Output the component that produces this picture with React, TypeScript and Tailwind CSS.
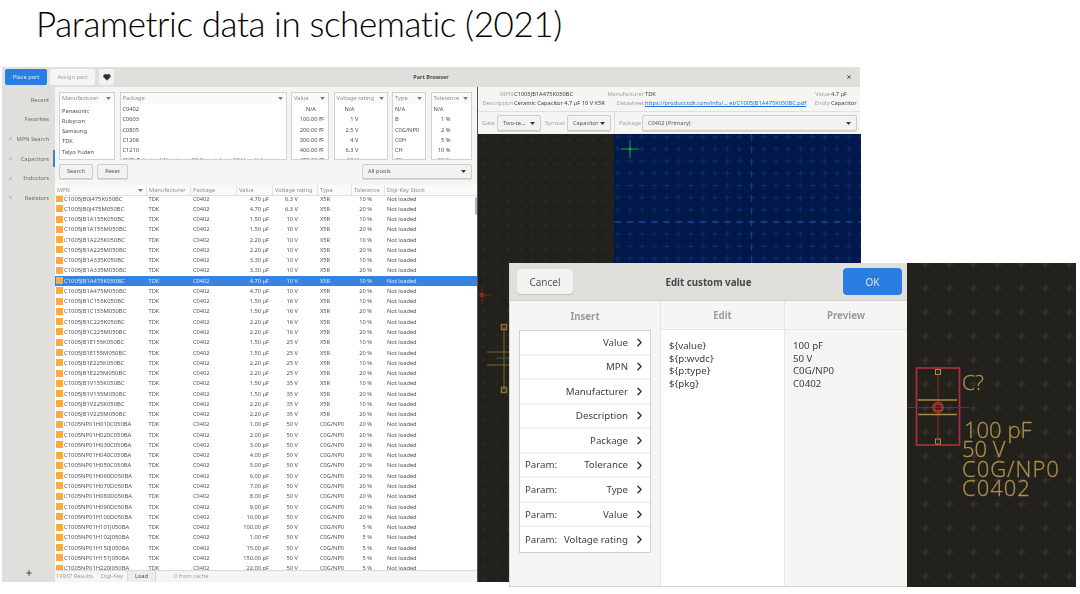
import { ChevronRight, Heart, Plus, X } from "lucide-react";

const TABLE_COLS = "grid grid-cols-[92px_44px_46px_36px_45px_34px_33px_1fr]";

const RAW_ROWS: [string, string, string, string, string][] = [
  ["C1005JB0J475K050BC", "4.70 µF", "6.3 V", "X5R", "10 %"],
  ["C1005JB0J475M050BC", "4.70 µF", "6.3 V", "X5R", "20 %"],
  ["C1005JB1A155K050BC", "1.50 µF", "10 V", "X5R", "10 %"],
  ["C1005JB1A155M050BC", "1.50 µF", "10 V", "X5R", "20 %"],
  ["C1005JB1A225K050BC", "2.20 µF", "10 V", "X5R", "10 %"],
  ["C1005JB1A225M050BC", "2.20 µF", "10 V", "X5R", "20 %"],
  ["C1005JB1A335K050BC", "3.30 µF", "10 V", "X5R", "10 %"],
  ["C1005JB1A335M050BC", "3.30 µF", "10 V", "X5R", "20 %"],
  ["C1005JB1A475K050BC", "4.70 µF", "10 V", "X5R", "10 %"],
  ["C1005JB1A475M050BC", "4.70 µF", "10 V", "X5R", "20 %"],
  ["C1005JB1C155K050BC", "1.50 µF", "16 V", "X5R", "10 %"],
  ["C1005JB1C155M050BC", "1.50 µF", "16 V", "X5R", "20 %"],
  ["C1005JB1C225K050BC", "2.20 µF", "16 V", "X5R", "10 %"],
  ["C1005JB1C225M050BC", "2.20 µF", "16 V", "X5R", "20 %"],
  ["C1005JB1E155K050BC", "1.50 µF", "25 V", "X5R", "10 %"],
  ["C1005JB1E155M050BC", "1.50 µF", "25 V", "X5R", "20 %"],
  ["C1005JB1E225K050BC", "2.20 µF", "25 V", "X5R", "10 %"],
  ["C1005JB1E225M050BC", "2.20 µF", "25 V", "X5R", "20 %"],
  ["C1005JB1V155K050BC", "1.50 µF", "35 V", "X5R", "10 %"],
  ["C1005JB1V155M050BC", "1.50 µF", "35 V", "X5R", "20 %"],
  ["C1005JB1V225K050BC", "2.20 µF", "35 V", "X5R", "10 %"],
  ["C1005JB1V225M050BC", "2.20 µF", "35 V", "X5R", "20 %"],
  ["C1005NP01H010C050BA", "1.00 pF", "50 V", "C0G/NP0", "20 %"],
  ["C1005NP01H020C050BA", "2.00 pF", "50 V", "C0G/NP0", "20 %"],
  ["C1005NP01H030C050BA", "3.00 pF", "50 V", "C0G/NP0", "20 %"],
  ["C1005NP01H040C050BA", "4.00 pF", "50 V", "C0G/NP0", "20 %"],
  ["C1005NP01H050C050BA", "5.00 pF", "50 V", "C0G/NP0", "20 %"],
  ["C1005NP01H060D050BA", "6.00 pF", "50 V", "C0G/NP0", "20 %"],
  ["C1005NP01H070D050BA", "7.00 pF", "50 V", "C0G/NP0", "20 %"],
  ["C1005NP01H080D050BA", "8.00 pF", "50 V", "C0G/NP0", "20 %"],
  ["C1005NP01H090D050BA", "9.00 pF", "50 V", "C0G/NP0", "20 %"],
  ["C1005NP01H100D050BA", "10.00 pF", "50 V", "C0G/NP0", "20 %"],
  ["C1005NP01H101J050BA", "100.00 pF", "50 V", "C0G/NP0", "5 %"],
  ["C1005NP01H102J050BA", "1.00 nF", "50 V", "C0G/NP0", "5 %"],
  ["C1005NP01H150J050BA", "15.00 pF", "50 V", "C0G/NP0", "5 %"],
  ["C1005NP01H151J050BA", "150.00 pF", "50 V", "C0G/NP0", "5 %"],
  ["C1005NP01H220J050BA", "22.00 pF", "50 V", "C0G/NP0", "5 %"],
];

const SIDEBAR = [
  { label: "Recent" },
  { label: "Favorites" },
  { label: "MPN Search", closable: true },
  { label: "Capacitors", closable: true, active: true },
  { label: "Inductors", closable: true },
  { label: "Resistors", closable: true },
];

const FILTERS = [
  { title: "Manufacturer", w: "w-[56px]", items: ["Panasonic", "Rubycon", "Samsung", "TDK", "Taiyo Yuden"], cls: "pl-[2px] pt-[1.5px]", na: "" },
  { title: "Package", w: "w-[167px]", items: ["C0402", "C0603", "C0805", "C1206", "C1210", "SMD Polarized Aluminum 20 % tantalum, 10 V, radial"], cls: "pl-[2px]", na: "" },
  { title: "Value", w: "w-[38px]", items: ["N/A", "100.00 fF", "200.00 fF", "300.00 fF", "400.00 fF", "470.00 fF"], cls: "text-right pr-[4px]", na: "pr-[8px]" },
  { title: "Voltage rating", w: "w-[54px]", items: ["N/A", "1 V", "2.5 V", "4 V", "6.3 V", "10 V"], cls: "text-right pr-[28px]", na: "pr-[4px]" },
  { title: "Type", w: "w-[34px]", items: ["N/A", "B", "C0G/NP0", "C0H", "CH", "CK"], cls: "pl-[2px]", na: "" },
  { title: "Tolerance", w: "w-[41px]", items: ["N/A", "1 %", "2 %", "5 %", "10 %", "20 %"], cls: "text-right pr-[20px]", na: "pr-[7px]" },
];

const INSERTS = [
  { label: "Value" },
  { label: "MPN" },
  { label: "Manufacturer" },
  { label: "Description" },
  { label: "Package" },
  { label: "Tolerance", param: true },
  { label: "Type", param: true },
  { label: "Value", param: true },
  { label: "Voltage rating", param: true },
];

function Caret({ className }: { className?: string }) {
  return (
    <svg viewBox="0 0 8 5" className={className ?? "h-[3px] w-[5px] shrink-0"}>
      <path d="M0 0h8L4 5z" fill="currentColor" />
    </svg>
  );
}

function Combo({ children, className }: { children: React.ReactNode; className: string }) {
  return (
    <div className={`flex h-[16px] items-center justify-between rounded-[2px] border border-[#cfcdc9] bg-[#f3f2f0] px-[5px] text-[5.7px] text-[#55585a] shadow-[0_1px_0_#d8d6d2] ${className}`}>
      <span className="whitespace-nowrap">{children}</span>
      <Caret className="h-[3px] w-[5px] shrink-0 text-[#2e3436]" />
    </div>
  );
}

function Sidebar() {
  return (
    <aside className="flex w-[53px] shrink-0 flex-col bg-[#e1dfdc] pt-[3px] text-[5.7px] text-[#6a6c6c]">
      {SIDEBAR.map((s) => (
        <div key={s.label} className="relative flex h-[19.7px] items-center justify-end pr-[6px]">
          {s.closable && <X className="absolute left-[6px] top-[7px] h-[5px] w-[5px] text-[#8d8b88]" strokeWidth={2} />}
          <span className="whitespace-nowrap">{s.label}</span>
          {s.active && <div className="absolute right-0 top-[1px] h-[17px] w-[2px] bg-[#3584e4]" />}
        </div>
      ))}
      <div className="mt-auto flex h-[18px] items-center justify-center pl-[1px] text-[#2e3436]">
        <Plus className="h-[8px] w-[8px]" strokeWidth={2.5} />
      </div>
    </aside>
  );
}

function Filters() {
  return (
    <div className="flex h-[73px] shrink-0 gap-[4.5px] pl-[4px] pt-[5px]">
      {FILTERS.map((f) => (
        <div key={f.title} className={`${f.w} h-[68px] shrink-0 overflow-hidden border border-[#d4d2ce] bg-white`}>
          <div className="flex h-[11px] items-center justify-between bg-[#fafaf9] pl-[2px] pr-[3px] text-[5.7px] text-[#8d8f8f]">
            <span className="whitespace-nowrap">{f.title}</span>
            <Caret className="h-[3px] w-[5px] shrink-0 text-[#77797a]" />
          </div>
          <div className={`text-[5.7px] leading-[10.3px] text-[#4a4d4e] ${f.cls}`}>
            {f.items.map((it) => (
              <div key={it} className={`h-[10.3px] whitespace-nowrap ${it === "N/A" ? f.na : ""}`}>{it}</div>
            ))}
          </div>
        </div>
      ))}
    </div>
  );
}

function PartRow({ row, selected }: { row: (typeof RAW_ROWS)[number]; selected: boolean }) {
  const [mpn, value, volt, type, tol] = row;
  return (
    <div className={`${TABLE_COLS} h-[10.27px] shrink-0 items-center text-[5.7px] leading-[10px] ${selected ? "bg-[#3584e4] text-[#dfeafa]" : "text-[#4f5254]"}`}>
      <div className="flex items-center whitespace-nowrap pl-[1px] text-[5.85px]">
        <div className="mr-[1px] h-[7px] w-[7px] shrink-0 bg-[#fdab3b]" />
        {mpn}
      </div>
      <div className="pl-[1.5px]">TDK</div>
      <div className="pl-[2px]">C0402</div>
      <div className="whitespace-nowrap pr-[4px] text-right">{value}</div>
      <div className="pr-[20px] text-right">{volt}</div>
      <div className="pl-[2px]">{type}</div>
      <div className="pr-[13px] text-right">{tol}</div>
      <div className="whitespace-nowrap pl-[2px]">Not loaded</div>
    </div>
  );
}

function PartTable() {
  const headers = ["MPN", "Manufacturer", "Package", "Value", "Voltage rating", "Type", "Tolerance", "Digi-Key Stock"];
  return (
    <div className="relative flex min-h-0 flex-1 flex-col bg-white">
      <div className={`${TABLE_COLS} relative z-10 h-[11px] shrink-0 items-center border-b border-[#e2e0dd] bg-[#fafaf9] text-[5.7px] text-[#8d8f8f]`}>
        {headers.map((h, i) => (
          <div key={h} className={`flex h-full items-center justify-between whitespace-nowrap pl-[2px] pr-[3px] ${i < 7 ? "border-r border-[#e6e4e1]" : ""}`}>
            {h}
            {i === 0 && <Caret className="h-[3px] w-[5px] text-[#77797a]" />}
          </div>
        ))}
      </div>
      <div className="min-h-0 flex-1 overflow-hidden">
        <div className="-mt-[2.6px] flex flex-col">
          {RAW_ROWS.map((r) => (
            <PartRow key={r[0]} row={r} selected={r[0] === "C1005JB1A475K050BC"} />
          ))}
        </div>
      </div>
      <div className="absolute right-0 top-[12px] h-[18px] w-[2px] rounded-full bg-[#b5b5b5]" />
    </div>
  );
}

function StatusBar() {
  return (
    <div className="flex h-[12px] shrink-0 items-center border-t border-[#dcdad6] bg-[#f6f5f4] pl-[1px] text-[5.7px] text-[#a0a1a1]">
      <span className="w-[45px] whitespace-nowrap">19937 Results</span>
      <span className="w-[26px] whitespace-nowrap">Digi-Key</span>
      <div className="flex h-full w-[29px] items-center justify-center border-x border-[#dcdad6] bg-[#eeedeb] text-[#4a4d4e]">Load</div>
      <span className="ml-[18px] whitespace-nowrap">0 from cache</span>
    </div>
  );
}

function BrowserPane() {
  return (
    <div className="flex w-[422px] shrink-0 flex-col">
      <Filters />
      <div className="flex h-[25px] shrink-0 items-start justify-between pl-[4px] pr-[5px] pt-[4px] text-[5.7px] text-[#55585a]">
        <div className="flex gap-[4px]">
          <div className="flex h-[15px] w-[34px] items-center justify-center rounded-[2px] border border-[#cfcdc9] bg-[#f3f2f0] shadow-[0_1px_0_#d8d6d2]">Search</div>
          <div className="flex h-[15px] w-[31px] items-center justify-center rounded-[2px] border border-[#cfcdc9] bg-[#f3f2f0] shadow-[0_1px_0_#d8d6d2]">Reset</div>
        </div>
        <Combo className="!h-[15px] w-[110px]">All pools</Combo>
      </div>
      <PartTable />
      <StatusBar />
    </div>
  );
}

function InfoBar() {
  const label = "text-right text-[#a2a3a3] whitespace-nowrap";
  const value = "pl-[1px] text-[#3c3f40] whitespace-nowrap";
  return (
    <div className="grid h-[25px] shrink-0 grid-cols-[35px_93px_38px_167px_19px_1fr] content-center border-b border-[#e2e0dd] bg-[#f6f5f4] text-[5.7px] leading-[9.5px]">
      <div className={label}>MPN</div>
      <div className={value}>C1005JB1A475K050BC</div>
      <div className={label}>Manufacturer</div>
      <div className={value}>TDK</div>
      <div className={label}>Value</div>
      <div className={value}>4.7 µF</div>
      <div className={label}>Description</div>
      <div className={value}>Ceramic Capacitor 4.7 µF 10 V X5R</div>
      <div className={label}>Datasheet</div>
      <div className="overflow-hidden whitespace-nowrap pl-[1px] text-[#1c71d8] underline">https://product.tdk.com/info/… et/C1005JB1A475K050BC.pdf</div>
      <div className={label}>Entity</div>
      <div className={value}>Capacitor</div>
    </div>
  );
}

function GateBar() {
  const label = "text-[#a2a3a3] whitespace-nowrap";
  return (
    <div className="flex h-[22px] shrink-0 items-center bg-[#f6f5f4] pl-[4px] text-[5.7px]">
      <span className={`${label} w-[15px]`}>Gate</span>
      <Combo className="w-[44px]">Two-te...</Combo>
      <span className={`${label} ml-[4px] w-[22px]`}>Symbol</span>
      <Combo className="w-[44px]">Capacitor</Combo>
      <div className="ml-[3px] h-full w-px bg-[#dcdad6]" />
      <span className={`${label} ml-[4px] w-[23px]`}>Package</span>
      <Combo className="w-[215px]">C0402 (Primary)</Combo>
    </div>
  );
}

function DarkCanvas() {
  return (
    <svg className="h-full w-[136px] shrink-0 bg-[#23211c]" viewBox="0 0 136 448">
      <defs>
        <pattern id="darkGrid" width="12.17" height="12.17" patternUnits="userSpaceOnUse">
          <path d="M6 4v4M4 6h4" stroke="#2c2a25" strokeWidth="1" />
        </pattern>
      </defs>
      <rect width="136" height="448" fill="url(#darkGrid)" />
      <path d="M4 152v18M-5 161H13" stroke="#6e241b" strokeWidth="1" />
      <rect x="2" y="159" width="4" height="4" fill="#8a2a1d" />
      <path d="M26 193V256M9 218H34M9 231H34" stroke="#7d6632" strokeWidth="1" />
      <path d="M19 224H34" stroke="#2f6a38" strokeWidth="1" />
      <rect x="23.5" y="190.5" width="5" height="5" fill="none" stroke="#8d7238" strokeWidth="1.5" />
      <rect x="23.5" y="253.5" width="5" height="5" fill="none" stroke="#8d7238" strokeWidth="1.5" />
    </svg>
  );
}

function BlueCanvas() {
  return (
    <svg className="h-full w-[247px] shrink-0 bg-[#01184a]" viewBox="0 0 247 448">
      <defs>
        <pattern id="blueGrid" x="9.9" y="8.9" width="12.17" height="12.17" patternUnits="userSpaceOnUse">
          <path d="M6.08 3v6.2M3 6.08h6.2" stroke="#0f3272" strokeWidth="0.8" />
        </pattern>
      </defs>
      <rect width="247" height="448" fill="url(#blueGrid)" />
      <path d="M0 88H247" stroke="#1a50ac" strokeWidth="1" strokeDasharray="7 5.17" strokeDashoffset="-0.5" />
      <path d="M137.7 0V448" stroke="#17448f" strokeWidth="1" strokeDasharray="7 5.17" strokeDashoffset="-0.5" />
      <path d="M16 6V24M7 15H25" stroke="#17a32d" strokeWidth="1" />
      <circle cx="16" cy="15" r="1.5" fill="#17a32d" />
    </svg>
  );
}

function SymbolPreview() {
  return (
    <svg className="h-full w-full bg-[#23211c]" viewBox="0 0 169 324">
      <defs>
        <pattern id="symGrid" x="6.7" y="13.3" width="24" height="24" patternUnits="userSpaceOnUse">
          <path d="M12 8v8M8 12h8" stroke="#45433d" strokeWidth="0.8" />
        </pattern>
      </defs>
      <rect width="169" height="324" fill="url(#symGrid)" />
      <rect x="9.5" y="105" width="43" height="77" fill="none" stroke="#b02c3c" strokeWidth="1.7" />
      <path d="M31 108V179M0 144.5H62" stroke="#7a2c1c" strokeWidth="1.2" />
      <path d="M11 137H50M11 151.5H50" stroke="#a88a45" strokeWidth="1.5" />
      <circle cx="31" cy="144.5" r="5" fill="none" stroke="#b13a2a" strokeWidth="1.5" />
      <rect x="28" y="141.5" width="6" height="6" fill="none" stroke="#b13a2a" strokeWidth="1" />
      <rect x="28.5" y="106.5" width="5" height="5" fill="none" stroke="#a88a45" strokeWidth="1" />
      <rect x="28.5" y="176" width="5" height="5" fill="none" stroke="#a88a45" strokeWidth="1" />
      <g fill="#ad8f4a" stroke="#ad8f4a" strokeWidth="0.3" fontFamily="'Open Sans', sans-serif" fontWeight="300">
        <text x="55" y="127" fontSize="21">C?</text>
        <text x="57" y="175" fontSize="22">100 pF</text>
        <text x="55" y="194" fontSize="22">50 V</text>
        <text x="55" y="214" fontSize="22" letterSpacing="1">C0G/NP0</text>
        <text x="55" y="233" fontSize="22" letterSpacing="1">C0402</text>
      </g>
    </svg>
  );
}

function EditDialog() {
  return (
    <div className="absolute left-[509px] top-[263px] flex h-[324px] w-[567px] overflow-hidden bg-[#f6f5f4] font-['Noto_Sans',sans-serif] text-[9.7px] text-[#3c3f40] blur-[0.2px]">
      <div className="flex w-[398px] shrink-0 flex-col border-b border-l border-[#d6d4d0]">
        <div className="flex h-[38px] shrink-0 items-center justify-between border-b border-[#d2d0cc] bg-[#e1dfdc] pl-[7px] pr-[5px]">
          <div className="flex h-[25px] w-[56px] items-center justify-center rounded-[4px] bg-[#f3f2f0] pt-[2px] text-[10px] text-[#55585a] shadow-[0_1px_1px_#c4c2be]">Cancel</div>
          <span className="ml-[1px] pt-[3px] text-[9.7px] font-bold text-[#45484a]">Edit custom value</span>
          <div className="flex h-[27px] w-[59px] items-center justify-center rounded-[4px] bg-[#2a7de1] pt-[1px] text-[10px] text-[#d9e8fb]">OK</div>
        </div>
        <div className="flex min-h-0 flex-1">
          <div className="flex w-[150px] shrink-0 flex-col items-start pl-[9px]">
            <div className="flex h-[29px] w-[132px] items-center justify-center pt-[3px] font-bold text-[#9a9b9b]">Insert</div>
            <div className="w-[132px] border border-[#d2d0cc] bg-white">
              {INSERTS.map((it) => (
                <div key={`${it.param}-${it.label}`} className="flex h-[24.55px] items-center justify-between border-b-2 border-[#f3f2f0] pl-[5px] pr-[4px] last:border-b-0">
                  <span className="pt-[1.5px]">{it.param ? "Param:" : ""}</span>
                  <span className="flex items-center gap-[5px] whitespace-nowrap">
                    <span className="pt-[1.5px]">{it.label}</span>
                    <ChevronRight className="h-[13px] w-[13px] text-[#2e3436]" strokeWidth={2.6} />
                  </span>
                </div>
              ))}
            </div>
          </div>
          <div className="flex w-[125px] shrink-0 flex-col border-x border-[#e8e6e3]">
            <div className="flex h-[29px] items-center justify-center border-b border-[#e8e6e3] pt-[3px] font-bold text-[#9a9b9b]">Edit</div>
            <div className="flex-1 bg-white pl-[8px] pt-[10px] leading-[12.7px]">
              <div>{"${value}"}</div>
              <div>{"${p:wvdc}"}</div>
              <div>{"${p:type}"}</div>
              <div>{"${pkg}"}</div>
            </div>
          </div>
          <div className="flex flex-1 flex-col">
            <div className="flex h-[29px] items-center justify-center border-b border-[#e8e6e3] pt-[3px] font-bold text-[#9a9b9b]">Preview</div>
            <div className="flex-1 pl-[8px] pt-[10px] leading-[12.7px]">
              <div>100 pF</div>
              <div>50 V</div>
              <div>C0G/NP0</div>
              <div>C0402</div>
            </div>
          </div>
        </div>
      </div>
      <div className="min-w-0 flex-1">
        <SymbolPreview />
      </div>
    </div>
  );
}

export default function App() {
  return (
    <div className="relative h-[594px] w-[1080px] overflow-hidden bg-white font-['Noto_Sans',sans-serif]">
      <h1 className="h-[67px] whitespace-nowrap pl-[36px] pt-[1px] font-['Lato',sans-serif] text-[35px] font-light leading-[44px] tracking-[-0.4px] text-black">
        Parametric data in schematic (2021)
      </h1>
      <div className="ml-[2px] flex h-[515px] w-[858px] flex-col bg-[#f6f5f4] blur-[0.35px]">
        <header className="relative flex h-[20px] shrink-0 items-center gap-[3px] bg-[#e1dfdc] pl-[3px] text-[5.7px]">
          <div className="flex h-[16px] w-[42px] items-center justify-center rounded-[2px] bg-[#2a7de1] text-[#d9e8fb]">Place part</div>
          <div className="flex h-[16px] w-[45px] items-center justify-center rounded-[2px] bg-[#f6f5f4] text-[#a2a3a3]">Assign part</div>
          <div className="ml-[1px] flex h-[16px] w-[15px] items-center justify-center rounded-[2px] bg-[#f3f2f0]">
            <Heart className="h-[8px] w-[8px] fill-[#2e3436] text-[#2e3436]" />
          </div>
          <span className="absolute left-[429px] top-[6px] -translate-x-1/2 text-[5.5px] font-bold text-[#45484a]">Part Browser</span>
          <X className="absolute right-[8px] top-[7px] h-[6px] w-[6px] text-[#2e3436]" strokeWidth={3} />
        </header>
        <div className="flex min-h-0 flex-1">
          <Sidebar />
          <BrowserPane />
          <div className="flex min-w-0 flex-1 flex-col border-l border-[#55534e]">
            <InfoBar />
            <GateBar />
            <div className="flex min-h-0 flex-1">
              <DarkCanvas />
              <BlueCanvas />
            </div>
          </div>
        </div>
      </div>
      <EditDialog />
    </div>
  );
}
